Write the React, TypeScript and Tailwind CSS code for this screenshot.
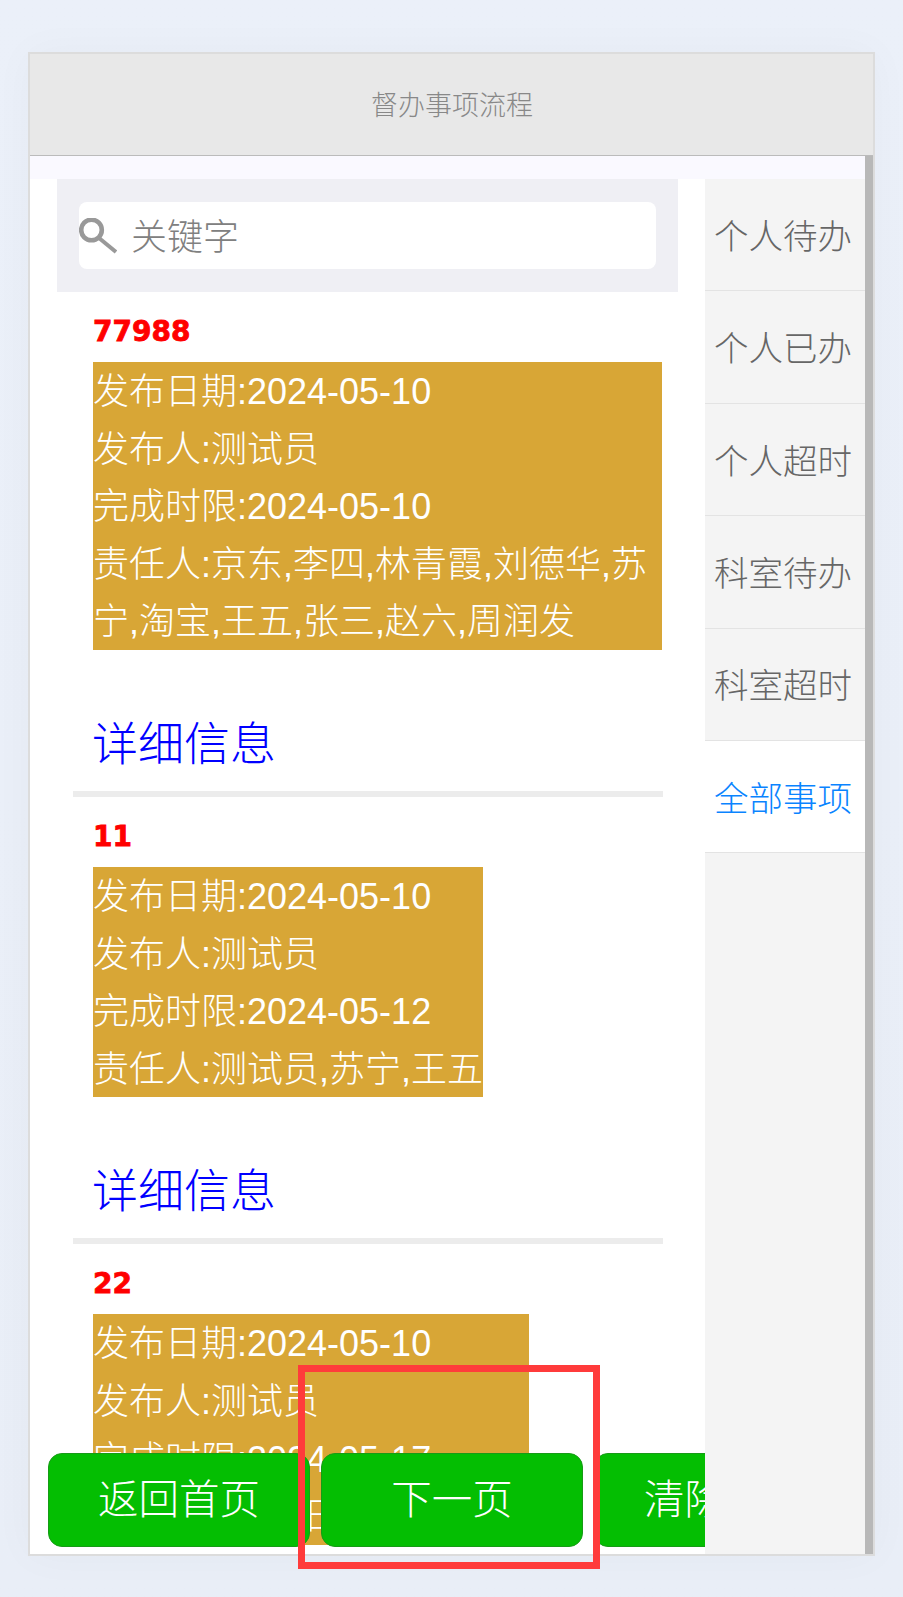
import React from 'react'

interface Task {
  id: string
  lines: string[]
}

const tasks: Task[] = [
  {
    id: '77988',
    lines: [
      '发布日期:2024-05-10',
      '发布人:测试员',
      '完成时限:2024-05-10',
      '责任人:京东,李四,林青霞,刘德华,苏宁,淘宝,王五,张三,赵六,周润发',
    ],
  },
  {
    id: '11',
    lines: ['发布日期:2024-05-10', '发布人:测试员', '完成时限:2024-05-12', '责任人:测试员,苏宁,王五'],
  },
  {
    id: '22',
    lines: ['发布日期:2024-05-10', '发布人:测试员', '完成时限:2024-05-17', '责任人:王五,阳华,苏宁,张三'],
  },
]

const tabs = ['个人待办', '个人已办', '个人超时', '科室待办', '科室超时', '全部事项']
const buttons = ['返回首页', '下一页', '清除条件']

export default function App() {
  return (
    <div className="h-[1597px] overflow-hidden bg-gradient-to-b from-[#ebf0f9] to-[#e9eef7] pl-[28px] pt-[52px] font-['Liberation_Sans','Noto_Sans_CJK_SC',sans-serif] font-light">
      <div className="relative flex h-[1504px] w-[847px] flex-col border-2 border-[#dcdcdc] bg-white shadow-[0_0_40px_rgba(0,0,20,0.03)]">
        <div className="flex h-[102px] shrink-0 items-center justify-center border-b border-[#bbbbbb] bg-[#e8e8e8] pl-[1px] pt-[4px] text-[27px] text-[#888888]">
          督办事项流程
        </div>

        <div className="flex min-h-0 flex-1">
          <div className="flex min-w-0 flex-1 flex-col">
            <div className="h-[23px] shrink-0 bg-[#faf9ff]" />
            <div className="flex min-h-0 flex-1">
              {/* list column */}
              <div className="relative w-[675px] shrink-0 overflow-hidden">
                <div className="ml-[27px] h-[113px] w-[621px] bg-[#efeff4] px-[22px] pt-[23px]">
                  <div className="flex h-[67px] items-center gap-[14px] rounded-[8px] bg-white">
                    <svg width="38" height="36" viewBox="0 0 38 36" fill="none" className="shrink-0">
                      <circle cx="12.5" cy="12" r="10.3" stroke="#999999" strokeWidth="4.6" />
                      <path d="M20 20 L37 34" stroke="#999999" strokeWidth="4" />
                    </svg>
                    <span className="pt-[4px] text-[36px] text-[#808080]">关键字</span>
                  </div>
                </div>

                {tasks.map((task) => (
                  <div key={task.id} className="ml-[43px] w-[590px]">
                    <div className="pb-[10px] pl-[20px] pt-[20px] font-['DejaVu_Sans',sans-serif] text-[28px] font-bold leading-[40px] text-[#ff0000] [-webkit-text-stroke:0.8px_#ff0000]">
                      {task.id}
                    </div>
                    <div className="ml-[20px] flow-root w-fit max-w-[569px] bg-[#d8a636] text-[36px] leading-[57.6px] text-white">
                      <div className="-mb-[1px] pt-[1px]">
                        {task.lines.map((line) => (
                          <div key={line}>{line}</div>
                        ))}
                      </div>
                    </div>
                    <div className="mt-[64px] pl-[19px] text-[46px] leading-[60px] text-[#0000ff]">详细信息</div>
                    <div className="mt-[17px] h-[6px] bg-[#ececec]" />
                  </div>
                ))}

                {/* bottom buttons */}
                <div className="absolute bottom-[7px] left-[18px] flex w-max gap-[11px]">
                  {buttons.map((label) => (
                    <div
                      key={label}
                      className="flex h-[94px] w-[262px] items-center justify-center rounded-[14px] border border-[#179b16] bg-[#04be02] text-[40.5px] text-white"
                    >
                      {label}
                    </div>
                  ))}
                </div>
              </div>

              {/* tabs */}
              <div className="min-w-0 flex-1 bg-[#f4f4f4]">
                {tabs.map((tab, i) => (
                  <div
                    key={tab}
                    className={`flex h-[112.4px] items-center justify-center border-b border-[#e3e3e3] pr-[4px] pt-[6px] text-[34.5px] ${
                      i === 5 ? 'bg-white text-[#0a84ff]' : 'text-[#666666]'
                    }`}
                  >
                    {tab}
                  </div>
                ))}
              </div>
            </div>
          </div>
          {/* scrollbar */}
          <div className="w-[8px] shrink-0 bg-[#b8b8b8]" />
        </div>

        {/* red annotation box */}
        <div className="pointer-events-none absolute left-[268px] top-[1311px] h-[204px] w-[302px] border-[7px] border-[#ff3b3b]" />
      </div>
    </div>
  )
}
